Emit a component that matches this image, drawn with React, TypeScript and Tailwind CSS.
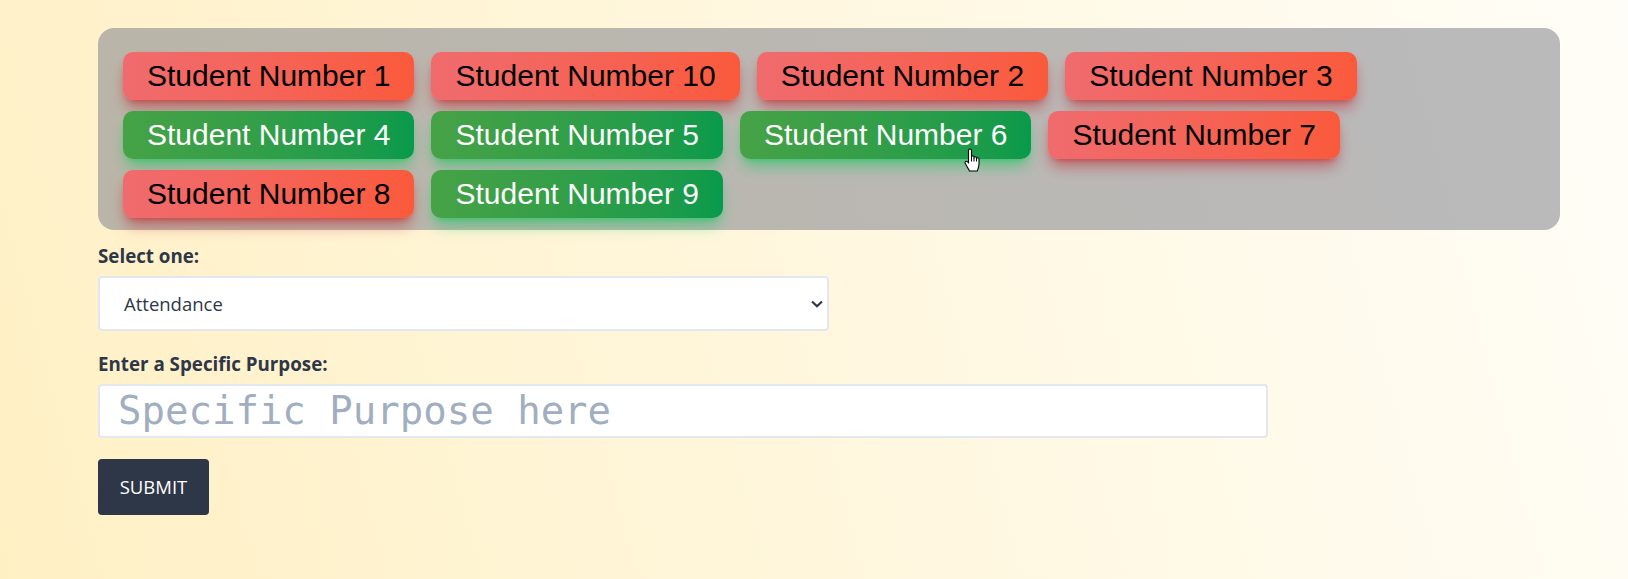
import { useState } from "react";

const students = [
  { name: "Student Number 1", present: false },
  { name: "Student Number 10", present: false },
  { name: "Student Number 2", present: false },
  { name: "Student Number 3", present: false },
  { name: "Student Number 4", present: true },
  { name: "Student Number 5", present: true },
  { name: "Student Number 6", present: true, hover: true },
  { name: "Student Number 7", present: false },
  { name: "Student Number 8", present: false },
  { name: "Student Number 9", present: true },
];

// the hand pointer sitting over "Student Number 6"
function HandCursor() {
  return (
    <svg
      className="pointer-events-none absolute left-[224px] top-[37px] h-[24px] w-[17px]"
      viewBox="0 0 17 24"
    >
      <path
        d="M6 1 C6.8 1 7.5 1.6 7.5 2.5 V9 C7.5 8.3 8 7.8 8.75 7.8 C9.5 7.8 10 8.3 10 9 V10 C10 9.3 10.5 8.8 11.25 8.8 C12 8.8 12.5 9.3 12.5 10 V11 C12.5 10.3 13 9.8 13.75 9.8 C14.5 9.8 15 10.3 15 11 V16 C15 19 13.8 21 13.3 23 H5.5 C4.6 21 2.6 18 1.3 15.6 C0.8 14.6 1.1 13.6 2 13.3 C2.8 13.1 3.6 13.6 4.5 15 V2.5 C4.5 1.6 5.2 1 6 1 Z"
        fill="#fff"
        stroke="#000"
        strokeWidth="1.1"
        strokeLinejoin="round"
      />
      <path d="M7.5 9 V13.5 M10 10 V13.5 M12.5 11 V13.5" stroke="#000" strokeWidth="1" />
    </svg>
  );
}

export default function App() {
  const [purpose, setPurpose] = useState("");
  const [kind, setKind] = useState("Attendance");

  return (
    <div className="min-h-screen w-full bg-linear-75 from-[#fff0c4] to-[#fffdf7] pt-[28px] font-['Open_Sans',sans-serif]">
      <div className="ml-[98px] w-[1462px]">
        {/* Student chips */}
        <div className="flex flex-wrap gap-x-[17px] gap-y-[11px] rounded-2xl bg-[#82848c]/55 pt-6 pr-6 pb-3 pl-[25px]">
          {students.map((s) => (
            <button
              key={s.name}
              className={
                s.present
                  ? "relative rounded-[10px] bg-linear-to-r from-[#46a246] to-[#079a4b] px-6 py-1.5 font-['Liberation_Sans',Arial,sans-serif] text-3xl text-white shadow-lg shadow-green-500/50"
                  : "relative rounded-[10px] bg-linear-to-r from-[#f06b6e] to-[#fa5a3b] px-6 py-1.5 font-['Liberation_Sans',Arial,sans-serif] text-3xl text-black shadow-lg shadow-red-700/45"
              }
            >
              {s.name}
              {s.hover && <HandCursor />}
            </button>
          ))}
        </div>

        {/* Form */}
        <form className="mt-[14px] text-[18.5px] text-[#2d3748]" onSubmit={(e) => e.preventDefault()}>
          <label className="mb-2 block text-[18.75px] leading-6 font-bold">Select one:</label>
          <div className="relative w-1/2">
            <select
              value={kind}
              onChange={(e) => setKind(e.target.value)}
              className="h-[55px] w-full appearance-none rounded border-2 border-[#e2e8f0] bg-white pl-6 text-[18.5px] text-[#2d3748] outline-none"
            >
              <option>Attendance</option>
              <option>Excuse</option>
              <option>Other</option>
            </select>
            <svg
              className="pointer-events-none absolute right-[6px] top-1/2 h-[8px] w-[12px] -translate-y-1/2"
              viewBox="0 0 12 8"
            >
              <path d="M1 1.5 L6 6.3 L11 1.5" fill="none" stroke="#2d3748" strokeWidth="2.2" />
            </svg>
          </div>

          <label className="mt-[21px] mb-2 block text-[18.75px] leading-6 font-bold">Enter a Specific Purpose:</label>
          <input
            value={purpose}
            onChange={(e) => setPurpose(e.target.value)}
            placeholder="Specific Purpose here"
            className="block h-[54px] w-4/5 rounded border-2 border-[#e2e8f0] bg-white pl-[18px] font-['DejaVu_Sans_Mono',monospace] text-[39px] text-[#2d3748] outline-none placeholder:text-[#a0aec0]"
          />

          <button
            type="submit"
            className="mt-[21px] flex h-[56px] w-[111px] items-center justify-center rounded bg-[#2d3748] text-[18.5px] text-white"
          >
            SUBMIT
          </button>
        </form>
      </div>
    </div>
  );
}
